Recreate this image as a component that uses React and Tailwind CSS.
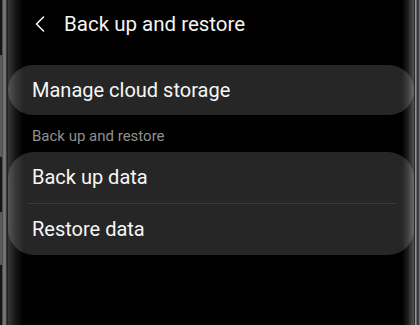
export default function App() {
  const font = { fontFamily: 'Roboto, "Noto Sans", sans-serif' };
  return (
    <div className="w-[420px] h-[325px] bg-black flex overflow-hidden" style={font}>
      {/* left phone frame */}
      <div className="flex h-full shrink-0">
        <div className="w-[2px] h-full flex flex-col bg-[#161616]">
          <div className="h-[55px]" />
          <div className="h-[102px] bg-[#5c5c60] rounded-l-[1px]" />
          <div className="h-[55px]" />
          <div className="h-[53px] bg-[#5c5c60] rounded-l-[1px]" />
        </div>
        <div className="w-[6px] h-full bg-[linear-gradient(to_right,#2c2c2e_0px,#6c6c70_1px,#7c7c80_3px,#5a5a5e_4px,#1c1c1c_5px,#242424_6px)]" />
      </div>

      {/* screen */}
      <div className="relative flex-1 h-full flex flex-col">
        {/* header */}
        <div className="h-[65px] pt-[11px] flex items-start shrink-0">
          <div className="w-[56px] h-[26px] flex items-center pl-[27px]">
            <svg width="10" height="16" viewBox="0 0 10 16" fill="none">
              <path d="M8.5 1L1.5 8L8.5 15" stroke="#f2f2f2" strokeWidth="1.6" strokeLinecap="round" strokeLinejoin="round" />
            </svg>
          </div>
          <div className="text-[20.5px] leading-[26px] text-[#f4f4f4]">Back up and restore</div>
        </div>

        {/* card 1 */}
        <div className="h-[50px] rounded-[26px] bg-[#262626] flex items-center pl-[24px] shrink-0">
          <span className="text-[20px] leading-[50px] text-[#f6f6f6]">Manage cloud storage</span>
        </div>

        {/* section label */}
        <div className="h-[37px] pt-[13px] pl-[24px] shrink-0">
          <div className="text-[15px] leading-[17px] text-[#909090]">Back up and restore</div>
        </div>

        {/* card 2 */}
        <div className="rounded-[26px] bg-[#262626] flex flex-col shrink-0">
          <div className="h-[51px] flex items-center pl-[24px]">
            <span className="text-[20px] leading-[51px] text-[#f6f6f6]">Back up data</span>
          </div>
          <div className="h-px bg-[#3a3a3a] ml-[20px] mr-[18px]" />
          <div className="h-[51px] flex items-center pl-[24px]">
            <span className="text-[20px] leading-[51px] text-[#f6f6f6]">Restore data</span>
          </div>
        </div>

        {/* curved glass edge shading */}
        <div className="pointer-events-none absolute left-0 top-0 h-full w-[16px] bg-[linear-gradient(to_right,rgba(255,255,255,0.22),rgba(255,255,255,0.08)_50%,rgba(255,255,255,0))]" />
        <div className="pointer-events-none absolute right-0 top-0 h-full w-[12px] bg-[linear-gradient(to_left,rgba(255,255,255,0.32),rgba(255,255,255,0.12)_50%,rgba(255,255,255,0))]" />
      </div>

      {/* right phone frame */}
      <div className="w-[6px] h-full shrink-0 bg-[linear-gradient(to_right,#2a2a2c_0px,#2a2a2c_1px,#8c8c90_1px,#9a9a9e_2px,#3c3c3e_3px,#2a2a2c_4px,#5a5a5e_5px,#8a8a8e_6px)]" />
    </div>
  );
}
